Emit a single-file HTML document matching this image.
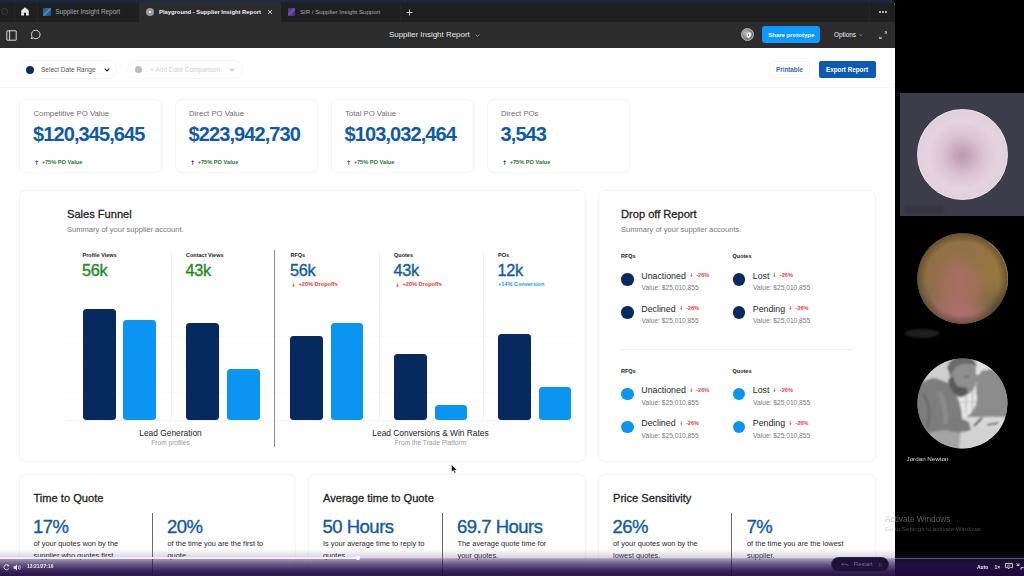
<!DOCTYPE html>
<html><head><meta charset="utf-8">
<style>
*{box-sizing:border-box;margin:0;padding:0}
html,body{width:1024px;height:576px;overflow:hidden;background:#000;font-family:"Liberation Sans",sans-serif}
.abs{position:absolute}
#win{position:absolute;left:0;top:0;width:895px;height:576px;background:#fff;overflow:hidden;border-top-right-radius:6px}
#tabs{position:absolute;left:0;top:0;width:895px;height:22px;background:#1f1f1f}
#tool{position:absolute;left:0;top:22px;width:895px;height:26px;background:#2c2c2c}
.tab{position:absolute;top:2px;height:20px;color:#b8b8b8;font-size:7px;line-height:20px;white-space:nowrap}
.card{position:absolute;background:#fff;border:1px solid #f5f6f7;border-radius:7px;box-shadow:0 0 3px rgba(0,0,0,.025)}
.lbl{position:absolute;color:#6f6f6f;font-size:7.75px;white-space:nowrap}
.big{position:absolute;color:#0e5aa7;font-weight:bold;font-size:20px;white-space:nowrap;letter-spacing:-.9px}
.grn{position:absolute;color:#237a30;font-weight:bold;font-size:5.65px;white-space:nowrap}
.h{position:absolute;color:#1f1f1f;font-size:11.1px;white-space:nowrap;-webkit-text-stroke:.3px #1f1f1f}
.sub{position:absolute;color:#777;font-size:7.55px;white-space:nowrap}
.bar{position:absolute;border-radius:3.5px}
.nv{background:#072a5e}.bl{background:#0a95f3}
.t5{position:absolute;font-size:5.5px;font-weight:bold;color:#222;white-space:nowrap}
.num{position:absolute;font-size:16.3px;white-space:nowrap;letter-spacing:-.3px;-webkit-text-stroke:.35px currentColor}
.red{position:absolute;font-size:5.6px;font-weight:bold;color:#e23b30;white-space:nowrap}
.dot{position:absolute;width:12.5px;height:12.5px;border-radius:50%}
.it{position:absolute;font-size:8.8px;color:#262626;white-space:nowrap}
.val{position:absolute;font-size:6.65px;color:#7a7a7a;white-space:nowrap}
.pct{position:absolute;color:#0e5aa7;font-size:18.5px;white-space:nowrap;letter-spacing:-.5px;-webkit-text-stroke:.35px #0e5aa7}
.desc{position:absolute;color:#2a2a2a;font-size:7.4px;line-height:11.5px;white-space:nowrap}
</style></head><body><div id="all" style="position:absolute;left:0;top:0;width:1024px;height:576px;overflow:hidden;filter:blur(.35px)">
<div id="win">
<div id="tabs">
<div class="abs" style="left:0;top:0;width:895px;height:2.5px;background:linear-gradient(#1b2b47,#18233a)"></div>
<div class="abs" style="left:0;top:14px;width:7px;height:7px;border:1px solid #3c3c3c;border-radius:50%;left:1px;top:8px"></div>
<div class="abs" style="left:14px;top:2px;width:1px;height:20px;background:#262626"></div>
<div class="abs" style="left:37px;top:2px;width:1px;height:20px;background:#262626"></div>
<svg class="abs" style="left:21px;top:7px" width="8" height="9" viewBox="0 0 8 9"><path d="M4 0.3 L7.8 3.6 V8.6 H5 V5.8 H3 V8.6 H0.2 V3.6 Z" fill="#e4e4e4"/></svg>
<div class="abs" style="left:43px;top:8px;width:8px;height:8px;background:linear-gradient(135deg,#20527f 0%,#2f74ad 45%,#5d9bcc 50%,#2a6aa2 58%,#1d4d7a 100%);border-radius:1px"></div>
<div class="tab" style="left:55.5px;color:#a9a9a9;font-size:6.35px">Supplier Insight Report</div>
<div class="abs" style="left:139px;top:2px;width:142px;height:20px;background:#2c2c2c;border-radius:3px 3px 0 0"></div>
<div class="abs" style="left:146px;top:8px;width:8px;height:8px;background:#9a9a9a;border-radius:50%"></div>
<div class="abs" style="left:149px;top:11px;width:2px;height:2px;background:#fff;border-radius:50%"></div>
<div class="tab" style="left:159px;color:#f2f2f2;font-weight:bold;font-size:5.85px">Playground - Supplier Insight Report</div>
<svg class="abs" style="left:267px;top:9px" width="6" height="6" viewBox="0 0 6 6"><path d="M1 1 L5 5 M5 1 L1 5" stroke="#d8d8d8" stroke-width="0.9"/></svg>
<div class="abs" style="left:287.5px;top:8px;width:7px;height:8px;background:linear-gradient(135deg,#4c2f86 0%,#6642a6 45%,#8467bd 50%,#5c3a9c 58%,#472b80 100%);border-radius:1px"></div>
<div class="tab" style="left:300px;color:#a9a9a9;font-size:6.1px">SIR / Supplier Insight Support</div>
<div class="abs" style="left:400px;top:2px;width:1px;height:20px;background:#262626"></div>
<svg class="abs" style="left:406px;top:8.5px" width="7" height="7" viewBox="0 0 7 7"><path d="M3.5 0.5 V6.5 M0.5 3.5 H6.5" stroke="#d8d8d8" stroke-width="0.9"/></svg>
<div class="abs" style="left:869px;top:2px;width:1px;height:20px;background:#262626"></div>
<div class="abs" style="left:879px;top:11px;width:1.6px;height:1.6px;background:#cfcfcf;border-radius:50%;box-shadow:3px 0 0 #cfcfcf,6px 0 0 #cfcfcf"></div>
</div>
<div id="tool">
<svg class="abs" style="left:5.5px;top:7.5px" width="11" height="11" viewBox="0 0 11 11"><rect x="0.8" y="0.8" width="9.4" height="9.4" rx="0.3" fill="none" stroke="#d9d9d9" stroke-width="1"/><path d="M3.6 0.8 V10.2" stroke="#d9d9d9" stroke-width="1"/></svg>
<svg class="abs" style="left:30px;top:7px" width="12" height="12" viewBox="0 0 12 12"><path d="M6.2 1.2 A4.3 4.3 0 1 1 3.2 8.9 L1.2 9.8 L2 7.6 A4.3 4.3 0 0 1 6.2 1.2 Z" fill="none" stroke="#d9d9d9" stroke-width="1"/></svg>
<div class="abs" style="left:389px;top:0;height:26px;line-height:26px;color:#e6e6e6;font-size:7.95px;white-space:nowrap">Supplier Insight Report</div>
<svg class="abs" style="left:475px;top:11.5px" width="5" height="3" viewBox="0 0 5 3"><path d="M0.5 0.5 L2.5 2.5 L4.5 0.5" fill="none" stroke="#a5a5a5" stroke-width="0.8"/></svg>
<div class="abs" style="left:741px;top:6px;width:13px;height:13px;border-radius:50%;background:radial-gradient(circle at 40% 40%,#c9c9c9,#7a7a7a 60%,#555);border:1px solid #bdbdbd"></div><div class="abs" style="left:746.5px;top:9.5px;width:3.5px;height:6px;border-radius:50%;background:#f2f2f2;transform:rotate(25deg);filter:blur(.4px)"></div><div class="abs" style="left:747.6px;top:11.6px;width:1.6px;height:2px;border-radius:50%;background:#666"></div>
<div class="abs" style="left:762.3px;top:4px;width:58px;height:17px;background:#0d99ff;border-radius:3px;color:#fff;font-size:6px;font-weight:bold;text-align:center;line-height:18.2px">Share prototype</div>
<div class="abs" style="left:834px;top:0;height:26px;line-height:26px;color:#ededed;font-size:6.4px;white-space:nowrap">Options</div>
<svg class="abs" style="left:859.3px;top:12.3px" width="3.6" height="2.2" viewBox="0 0 5 3"><path d="M0.5 0.5 L2.5 2.5 L4.5 0.5" fill="none" stroke="#a5a5a5" stroke-width="0.8"/></svg>
<svg class="abs" style="left:878.5px;top:8.5px" width="8.6" height="8.6" viewBox="0 0 9 9"><path d="M6 0.8 H8.2 V3 M8.2 0.8 L6 3 M3 8.2 H0.8 V6 M0.8 8.2 L3 6" fill="none" stroke="#cfcfcf" stroke-width="0.95"/></svg>
</div>
<div id="content">
<!-- filter row -->
<div class="abs" style="left:0;top:87px;width:895px;height:1px;background:#f3f3f4"></div>
<div class="abs" style="left:18px;top:60px;width:99px;height:19px;border:1px solid #f4f5f6;border-radius:10px;background:#fff"></div>
<div class="abs" style="left:25.5px;top:65.5px;width:8px;height:8px;border-radius:50%;background:#0a2d66"></div>
<div class="abs" style="left:41px;top:60px;height:19px;line-height:19px;font-size:6.5px;color:#555;white-space:nowrap">Select Date Range</div>
<svg class="abs" style="left:103.5px;top:68px" width="6" height="4" viewBox="0 0 6 4"><path d="M0.7 0.7 L3 3 L5.3 0.7" fill="none" stroke="#222" stroke-width="1.1"/></svg>
<div class="abs" style="left:127px;top:60px;width:116px;height:19px;border:1px solid #f6f6f7;border-radius:10px;background:#fff"></div>
<div class="abs" style="left:134.5px;top:66px;width:7px;height:7px;border-radius:50%;background:#bdbdbd"></div>
<div class="abs" style="left:150px;top:60px;height:19px;line-height:19px;font-size:6.6px;color:#d2d2d2;white-space:nowrap">+ Add Date Comparison</div>
<svg class="abs" style="left:229px;top:68px" width="6" height="4" viewBox="0 0 6 4"><path d="M0.7 0.7 L3 3 L5.3 0.7" fill="none" stroke="#c8c8c8" stroke-width="1.1"/></svg>
<div class="abs" style="left:769px;top:61px;width:41px;height:17px;border:1px solid #f5f5f6;border-radius:2px;color:#346da9;font-size:6.3px;font-weight:bold;text-align:center;line-height:15.5px">Printable</div>
<div class="abs" style="left:818.5px;top:61px;width:57px;height:17px;border-radius:2px;background:#0b5bb3;color:#fff;font-size:6.3px;font-weight:bold;text-align:center;line-height:17px">Export Report</div>
<!-- KPI cards -->
<div class="card" style="left:18.5px;top:98.5px;width:143.5px;height:74.5px"></div>
<div class="lbl" style="left:33.5px;top:108.5px">Competitive PO Value</div>
<div class="big" style="left:33px;top:123px">$120,345,645</div>
<div class="grn" style="left:34px;top:158.5px"><svg style="position:absolute;left:0.6px;top:1.2px" width="3.4" height="5" viewBox="0 0 3.4 5"><path d="M1.7 0.2 L3.3 1.9 H0.1Z" fill="#2c5c38"/><path d="M1.7 1.2 V4.9" stroke="#2c5c38" stroke-width="0.8"/></svg><span style="margin-left:7.7px">+75% PO Value</span></div>
<div class="card" style="left:174.5px;top:98.5px;width:143.5px;height:74.5px"></div>
<div class="lbl" style="left:189px;top:108.5px">Direct PO Value</div>
<div class="big" style="left:188.5px;top:123px">$223,942,730</div>
<div class="grn" style="left:190px;top:158.5px"><svg style="position:absolute;left:0.6px;top:1.2px" width="3.4" height="5" viewBox="0 0 3.4 5"><path d="M1.7 0.2 L3.3 1.9 H0.1Z" fill="#2c5c38"/><path d="M1.7 1.2 V4.9" stroke="#2c5c38" stroke-width="0.8"/></svg><span style="margin-left:7.7px">+75% PO Value</span></div>
<div class="card" style="left:330.5px;top:98.5px;width:143.5px;height:74.5px"></div>
<div class="lbl" style="left:345px;top:108.5px">Total PO Value</div>
<div class="big" style="left:344.5px;top:123px">$103,032,464</div>
<div class="grn" style="left:346px;top:158.5px"><svg style="position:absolute;left:0.6px;top:1.2px" width="3.4" height="5" viewBox="0 0 3.4 5"><path d="M1.7 0.2 L3.3 1.9 H0.1Z" fill="#2c5c38"/><path d="M1.7 1.2 V4.9" stroke="#2c5c38" stroke-width="0.8"/></svg><span style="margin-left:7.7px">+75% PO Value</span></div>
<div class="card" style="left:486.5px;top:98.5px;width:143.5px;height:74.5px"></div>
<div class="lbl" style="left:501px;top:108.5px">Direct POs</div>
<div class="big" style="left:500.5px;top:123px">3,543</div>
<div class="grn" style="left:502px;top:158.5px"><svg style="position:absolute;left:0.6px;top:1.2px" width="3.4" height="5" viewBox="0 0 3.4 5"><path d="M1.7 0.2 L3.3 1.9 H0.1Z" fill="#2c5c38"/><path d="M1.7 1.2 V4.9" stroke="#2c5c38" stroke-width="0.8"/></svg><span style="margin-left:7.7px">+75% PO Value</span></div>
<div class="card" style="left:18.5px;top:189.5px;width:567.5px;height:272.5px"></div>
<div class="h" style="left:67px;top:207.6px">Sales Funnel</div>
<div class="sub" style="left:67px;top:224.5px">Summary of your supplier account.</div>
<div class="abs" style="left:66px;top:308px;width:508px;height:0;border-top:1px dotted #f7f7f7"></div>
<div class="abs" style="left:66px;top:336px;width:508px;height:0;border-top:1px dotted #f7f7f7"></div>
<div class="abs" style="left:66px;top:364px;width:508px;height:0;border-top:1px dotted #f7f7f7"></div>
<div class="abs" style="left:66px;top:392px;width:508px;height:0;border-top:1px dotted #f7f7f7"></div>
<div class="abs" style="left:66px;top:420px;width:508px;height:1px;background:#f4f4f4"></div>
<div class="abs" style="left:170.5px;top:250px;width:1px;height:171px;background:#f1f1f1"></div>
<div class="abs" style="left:378.5px;top:250px;width:1px;height:171px;background:#f1f1f1"></div>
<div class="abs" style="left:482.5px;top:250px;width:1px;height:171px;background:#f1f1f1"></div>
<div class="abs" style="left:273.5px;top:250px;width:1.5px;height:197px;background:#8f8f8f"></div>
<div class="t5" style="left:82.5px;top:252px">Profile Views</div>
<div class="num" style="left:82px;top:261.3px;color:#1b8a23">56k</div>
<div class="t5" style="left:186px;top:252px">Contact Views</div>
<div class="num" style="left:185.5px;top:261.3px;color:#1b8a23">43k</div>
<div class="t5" style="left:290.5px;top:252px">RFQs</div>
<div class="num" style="left:290px;top:261.3px;color:#0e5aa7">56k</div>
<div class="red" style="left:290.5px;top:281px"><svg style="position:absolute;left:1.4px;top:1.5px" width="2.8" height="4.2" viewBox="0 0 2.8 4.2"><path d="M1.4 4.1 L2.7 2.5 H0.1Z" fill="#e0453a"/><path d="M1.4 0.1 V3" stroke="#e0453a" stroke-width="0.7"/></svg><span style="margin-left:8px">+20% Dropoffs</span></div>
<div class="t5" style="left:394px;top:252px">Quotes</div>
<div class="num" style="left:393.5px;top:261.3px;color:#0e5aa7">43k</div>
<div class="red" style="left:394.5px;top:281px"><svg style="position:absolute;left:1.4px;top:1.5px" width="2.8" height="4.2" viewBox="0 0 2.8 4.2"><path d="M1.4 4.1 L2.7 2.5 H0.1Z" fill="#e0453a"/><path d="M1.4 0.1 V3" stroke="#e0453a" stroke-width="0.7"/></svg><span style="margin-left:8px">+20% Dropoffs</span></div>
<div class="t5" style="left:498px;top:252px">POs</div>
<div class="num" style="left:497.5px;top:261.3px;color:#0e5aa7">12k</div>
<div class="red" style="left:498px;top:281px;color:#1a98ee;font-size:5.55px">+14% Conversion</div>
<div class="bar nv" style="left:82.5px;top:308.5px;width:33.0px;height:111.5px"></div>
<div class="bar bl" style="left:122.7px;top:320px;width:33.0px;height:100px"></div>
<div class="bar nv" style="left:186px;top:323px;width:33px;height:97px"></div>
<div class="bar bl" style="left:227px;top:369px;width:32.5px;height:51px"></div>
<div class="bar nv" style="left:290.4px;top:335.5px;width:32.2px;height:84.5px"></div>
<div class="bar bl" style="left:330.7px;top:323px;width:32.6px;height:97px"></div>
<div class="bar nv" style="left:394px;top:353.5px;width:32.5px;height:66.5px"></div>
<div class="bar bl" style="left:434.7px;top:405px;width:32.6px;height:15px"></div>
<div class="bar nv" style="left:498px;top:334px;width:32.5px;height:86px"></div>
<div class="bar bl" style="left:538.7px;top:387px;width:32.6px;height:33px"></div>
<div class="abs" style="left:70.5px;top:427.8px;width:200px;text-align:center;font-size:8.4px;color:#222;white-space:nowrap">Lead Generation</div>
<div class="abs" style="left:70.5px;top:438.8px;width:200px;text-align:center;font-size:6.6px;color:#9a9a9a;white-space:nowrap">From profiles</div>
<div class="abs" style="left:330.5px;top:427.8px;width:200px;text-align:center;font-size:8.4px;color:#222;white-space:nowrap">Lead Conversions &amp; Win Rates</div>
<div class="abs" style="left:330.5px;top:438.8px;width:200px;text-align:center;font-size:6.6px;color:#9a9a9a;white-space:nowrap">From the Trade Platform</div>
<div class="card" style="left:598px;top:189.5px;width:277.5px;height:272.5px"></div>
<div class="h" style="left:621px;top:207.6px">Drop off Report</div>
<div class="sub" style="left:621px;top:224.5px">Summary of your supplier accounts.</div>
<div class="t5" style="left:621px;top:253px">RFQs</div>
<div class="t5" style="left:732.5px;top:253px">Quotes</div>
<div class="dot" style="left:621px;top:273.2px;background:#0a2a5e"></div>
<div class="it" style="left:641.3px;top:270.6px">Unactioned <span style="font-size:5.6px;font-weight:bold;color:#e2473c;position:relative;top:-1.3px;left:1.6px"><svg style="display:inline-block;vertical-align:-0.2px;margin-right:3.6px" width="2.8" height="4.2" viewBox="0 0 2.8 4.2"><path d="M1.4 4.1 L2.7 2.5 H0.1Z" fill="#e0453a"/><path d="M1.4 0.1 V3" stroke="#e0453a" stroke-width="0.7"/></svg>-26%</span></div>
<div class="val" style="left:641.6px;top:284.2px">Value: $25,010,855</div><div class="dot" style="left:732.5px;top:273.2px;background:#0a2a5e"></div>
<div class="it" style="left:752.8px;top:270.6px">Lost <span style="font-size:5.6px;font-weight:bold;color:#e2473c;position:relative;top:-1.3px;left:1.6px"><svg style="display:inline-block;vertical-align:-0.2px;margin-right:3.6px" width="2.8" height="4.2" viewBox="0 0 2.8 4.2"><path d="M1.4 4.1 L2.7 2.5 H0.1Z" fill="#e0453a"/><path d="M1.4 0.1 V3" stroke="#e0453a" stroke-width="0.7"/></svg>-26%</span></div>
<div class="val" style="left:753.1px;top:284.2px">Value: $25,010,855</div><div class="dot" style="left:621px;top:306.2px;background:#0a2a5e"></div>
<div class="it" style="left:641.3px;top:303.6px">Declined <span style="font-size:5.6px;font-weight:bold;color:#e2473c;position:relative;top:-1.3px;left:1.6px"><svg style="display:inline-block;vertical-align:-0.2px;margin-right:3.6px" width="2.8" height="4.2" viewBox="0 0 2.8 4.2"><path d="M1.4 4.1 L2.7 2.5 H0.1Z" fill="#e0453a"/><path d="M1.4 0.1 V3" stroke="#e0453a" stroke-width="0.7"/></svg>-26%</span></div>
<div class="val" style="left:641.6px;top:317.2px">Value: $25,010,855</div><div class="dot" style="left:732.5px;top:306.2px;background:#0a2a5e"></div>
<div class="it" style="left:752.8px;top:303.6px">Pending <span style="font-size:5.6px;font-weight:bold;color:#e2473c;position:relative;top:-1.3px;left:1.6px"><svg style="display:inline-block;vertical-align:-0.2px;margin-right:3.6px" width="2.8" height="4.2" viewBox="0 0 2.8 4.2"><path d="M1.4 4.1 L2.7 2.5 H0.1Z" fill="#e0453a"/><path d="M1.4 0.1 V3" stroke="#e0453a" stroke-width="0.7"/></svg>-26%</span></div>
<div class="val" style="left:753.1px;top:317.2px">Value: $25,010,855</div>
<div class="abs" style="left:621px;top:348.5px;width:231px;height:1px;background:#f1f1f2"></div>
<div class="t5" style="left:621px;top:367.5px">RFQs</div>
<div class="t5" style="left:732.5px;top:367.5px">Quotes</div>
<div class="dot" style="left:621px;top:387.7px;background:#0a95f3"></div>
<div class="it" style="left:641.3px;top:385.1px">Unactioned <span style="font-size:5.6px;font-weight:bold;color:#e2473c;position:relative;top:-1.3px;left:1.6px"><svg style="display:inline-block;vertical-align:-0.2px;margin-right:3.6px" width="2.8" height="4.2" viewBox="0 0 2.8 4.2"><path d="M1.4 4.1 L2.7 2.5 H0.1Z" fill="#e0453a"/><path d="M1.4 0.1 V3" stroke="#e0453a" stroke-width="0.7"/></svg>-26%</span></div>
<div class="val" style="left:641.6px;top:398.7px">Value: $25,010,855</div><div class="dot" style="left:732.5px;top:387.7px;background:#0a95f3"></div>
<div class="it" style="left:752.8px;top:385.1px">Lost <span style="font-size:5.6px;font-weight:bold;color:#e2473c;position:relative;top:-1.3px;left:1.6px"><svg style="display:inline-block;vertical-align:-0.2px;margin-right:3.6px" width="2.8" height="4.2" viewBox="0 0 2.8 4.2"><path d="M1.4 4.1 L2.7 2.5 H0.1Z" fill="#e0453a"/><path d="M1.4 0.1 V3" stroke="#e0453a" stroke-width="0.7"/></svg>-26%</span></div>
<div class="val" style="left:753.1px;top:398.7px">Value: $25,010,855</div><div class="dot" style="left:621px;top:420.7px;background:#0a95f3"></div>
<div class="it" style="left:641.3px;top:418.1px">Declined <span style="font-size:5.6px;font-weight:bold;color:#e2473c;position:relative;top:-1.3px;left:1.6px"><svg style="display:inline-block;vertical-align:-0.2px;margin-right:3.6px" width="2.8" height="4.2" viewBox="0 0 2.8 4.2"><path d="M1.4 4.1 L2.7 2.5 H0.1Z" fill="#e0453a"/><path d="M1.4 0.1 V3" stroke="#e0453a" stroke-width="0.7"/></svg>-26%</span></div>
<div class="val" style="left:641.6px;top:431.7px">Value: $25,010,855</div><div class="dot" style="left:732.5px;top:420.7px;background:#0a95f3"></div>
<div class="it" style="left:752.8px;top:418.1px">Pending <span style="font-size:5.6px;font-weight:bold;color:#e2473c;position:relative;top:-1.3px;left:1.6px"><svg style="display:inline-block;vertical-align:-0.2px;margin-right:3.6px" width="2.8" height="4.2" viewBox="0 0 2.8 4.2"><path d="M1.4 4.1 L2.7 2.5 H0.1Z" fill="#e0453a"/><path d="M1.4 0.1 V3" stroke="#e0453a" stroke-width="0.7"/></svg>-26%</span></div>
<div class="val" style="left:753.1px;top:431.7px">Value: $25,010,855</div>
<!-- bottom cards -->
<div class="card" style="left:18.5px;top:473.5px;width:277.5px;height:120px"></div>
<div class="h" style="left:33.5px;top:492px">Time to Quote</div>
<div class="pct" style="left:33px;top:515.6px">17%</div>
<div class="desc" style="left:33.5px;top:538px">of your quotes won by the<br>supplier who quotes first.</div>
<div class="abs" style="left:151.6px;top:513px;width:1px;height:63px;background:#6a6a6a"></div>
<div class="pct" style="left:167px;top:515.6px">20%</div>
<div class="desc" style="left:167.5px;top:538px">of the time you are the first to<br>quote.</div>
<div class="card" style="left:308px;top:473.5px;width:278px;height:120px"></div>
<div class="h" style="left:323px;top:492px">Average time to Quote</div>
<div class="pct" style="left:322.5px;top:515.6px">50 Hours</div>
<div class="desc" style="left:323px;top:538px">Is your average time to reply to<br>quotes.</div>
<div class="abs" style="left:441.5px;top:513px;width:1px;height:63px;background:#6a6a6a"></div>
<div class="pct" style="left:457px;top:515.6px">69.7 Hours</div>
<div class="desc" style="left:457.5px;top:538px">The average quote time for<br>your quotes.</div>
<div class="card" style="left:598px;top:473.5px;width:277.5px;height:120px"></div>
<div class="h" style="left:613px;top:492px">Price Sensitivity</div>
<div class="pct" style="left:612.5px;top:515.6px">26%</div>
<div class="desc" style="left:613px;top:538px">of your quotes won by the<br>lowest quotes.</div>
<div class="abs" style="left:731px;top:513px;width:1px;height:63px;background:#6a6a6a"></div>
<div class="pct" style="left:746.5px;top:515.6px">7%</div>
<div class="desc" style="left:747px;top:538px">of the time you are the lowest<br>supplier.</div>
<!-- cursor -->
<svg class="abs" style="left:451px;top:464px" width="7" height="10" viewBox="0 0 7 10"><path d="M0.5 0.5 V8 L2.3 6.4 L3.6 9.3 L4.8 8.8 L3.5 6 H6 Z" fill="#111" stroke="#fff" stroke-width="0.5"/></svg>


</div>
</div>
<div id="side">
<div class="abs" style="left:900px;top:93px;width:124px;height:122.5px;background:#3c3c4b"></div>
<div class="abs" style="left:904px;top:205px;width:40px;height:8px;border-radius:4px;background:#35353f;filter:blur(1.2px)"></div>
<div class="abs" style="left:916.5px;top:109px;width:91px;height:91px;border-radius:50%;border:1px solid #ece6ea;background:radial-gradient(circle at 50% 51%,#bd9cb0 0%,#c4a4b7 10%,#dbc3d3 32%,#e5d4df 55%,#dfcfdb 76%,#bfb0be 92%,#a497a5 100%)"></div>
<svg class="abs" style="left:916.5px;top:232.5px" width="91" height="91" viewBox="0 0 91 91">
<defs><filter id="b2" x="-30%" y="-30%" width="160%" height="160%"><feGaussianBlur stdDeviation="8"/></filter><clipPath id="c2"><circle cx="45.5" cy="45.5" r="45.3"/></clipPath>
<radialGradient id="v2" cx="50%" cy="50%" r="50%"><stop offset="0.8" stop-color="#2a1c10" stop-opacity="0"/><stop offset="1" stop-color="#2a1c10" stop-opacity=".4"/></radialGradient></defs>
<g clip-path="url(#c2)"><rect width="91" height="91" fill="#8e6f46"/>
<g filter="url(#b2)"><ellipse cx="44" cy="16" rx="40" ry="14" fill="#927246"/><ellipse cx="42" cy="52" rx="19" ry="25" fill="#a86e62"/><ellipse cx="40" cy="82" rx="28" ry="13" fill="#aa706c"/><ellipse cx="78" cy="40" rx="14" ry="28" fill="#987840"/><ellipse cx="80" cy="72" rx="13" ry="12" fill="#625f44"/><ellipse cx="8" cy="66" rx="10" ry="16" fill="#846e52"/></g>
<circle cx="45.5" cy="45.5" r="45.5" fill="url(#v2)"/></g>
<path d="M72 9.5 A45 45 0 0 1 89.5 57" fill="none" stroke="#d2a060" stroke-width="0.7" stroke-opacity=".7"/>
</svg>
<div class="abs" style="left:905px;top:329px;width:34px;height:8.5px;border-radius:50%;background:#1f1f1f;filter:blur(.8px)"></div>
<svg class="abs" style="left:916.5px;top:357.5px" width="91" height="91" viewBox="0 0 91 91">
<defs><filter id="b3" x="-30%" y="-30%" width="160%" height="160%"><feGaussianBlur stdDeviation="1.2"/></filter><clipPath id="c3"><circle cx="45.5" cy="45.5" r="45"/></clipPath></defs>
<g clip-path="url(#c3)"><rect width="91" height="91" fill="#8a8a8a"/>
<g filter="url(#b3)">
<rect x="-5" y="-5" width="44" height="32" fill="#cfcfcf"/>
<rect x="55" y="-5" width="32" height="22" fill="#e2e2e2"/>
<rect x="38" y="24" width="26" height="36" fill="#e9e9e9"/>
<path d="M49 30 V56 M55.5 28 V56" stroke="#b5b5b5" stroke-width="1.4"/>
<path d="M40 44 H64" stroke="#c5c5c5" stroke-width="1.2"/>
<path d="M64 13 Q76 9 96 14 V60 H48 Q60 52 60 40 Q57 24 64 13Z" fill="#8c8c8c"/>
<path d="M44 59 H96 V96 H40Z" fill="#d9d9d9"/>
<path d="M-6 40 Q0 22 18 20 L34 26 L40 38 Q46 52 45 64 L50 70 L44 76 H-6Z" fill="#7d7d7d"/>
<path d="M6 36 Q16 50 10 70" stroke="#6e6e6e" stroke-width="3" fill="none"/>
<path d="M22 34 Q30 48 28 66" stroke="#8b8b8b" stroke-width="5" fill="none"/>
<path d="M32 8 Q34 -2 46 -1 Q58 0 59 8 L59 26 Q56 36 46 38 Q36 36 33 26Z" fill="#8f8f8f"/>
<path d="M30 10 Q34 -3 48 -2 Q58 -1 60 8 Q50 4 42 7 Q36 10 34 18Z" fill="#6b6b6b"/>
<path d="M31 22 Q33 34 42 39 Q48 40 51 34 L49 29 Q42 31 38 25 L36 18Z" fill="#585858"/>
<path d="M47 19 H52" stroke="#555" stroke-width="1.3"/>
<path d="M8 76 Q28 70 50 73 L78 78 L76 92 H6Z" fill="#a4a4a4"/>
<path d="M44 72 L80 70 L84 92 H42Z" fill="#d2d2d2"/>
<path d="M32 62 Q42 58 52 64 L54 72 Q44 76 32 73Z" fill="#7a7a7a"/>
<path d="M57 68 L65 60" stroke="#2e2e2e" stroke-width="1.8"/>
<path d="M70 67 L81 65" stroke="#3a3a3a" stroke-width="1.5"/>
</g></g></svg>
<div class="abs" style="left:906.5px;top:454.5px;color:#dcdcdc;font-size:6.25px;white-space:nowrap">Jordan Newton</div>
<div class="abs" style="left:885px;top:513.5px;font-size:8.3px;white-space:nowrap"><span style="color:#c9c9c9">Ac</span><span style="color:#5c5c5c">tivate Windows</span></div>
<div class="abs" style="left:885px;top:524.5px;font-size:6.2px;white-space:nowrap"><span style="color:#cfcfcf">Go </span><span style="color:#4a4a4a">to Settings to activate Windows.</span></div>
</div>
<div class="abs" style="left:0;top:549px;width:1024px;height:9px;background:linear-gradient(to bottom,rgba(70,50,110,0) 0%,rgba(70,50,110,.22) 100%)"></div>
<div class="abs" style="left:0;top:558px;width:1024px;height:18px;background:linear-gradient(to bottom,rgba(56,32,104,.40) 0%,rgba(44,22,86,.72) 35%,rgba(34,14,70,.9) 70%,rgba(28,9,60,.95) 100%)"></div>
<div class="abs" style="left:0;top:557.5px;width:1024px;height:1px;background:rgba(190,180,210,.45)"></div>
<div class="abs" style="left:0;top:557px;width:358px;height:1.8px;background:#f1eef6"></div>
<div class="abs" style="left:356px;top:556px;width:4px;height:4px;border-radius:50%;background:#fff"></div>
<div class="abs" style="left:27px;top:564px;color:#e8e8e8;font-size:4.9px;white-space:nowrap;font-weight:bold">13:21/27:16</div>
<svg class="abs" style="left:3px;top:563.5px" width="7" height="7" viewBox="0 0 7 7"><path d="M5.5 1.5 A2.6 2.6 0 1 0 5.8 4.6" fill="none" stroke="#e6e6e6" stroke-width="0.9"/><path d="M4 0.5 L6.3 1.2 L5 2.8Z" fill="#e6e6e6"/></svg>
<svg class="abs" style="left:12.5px;top:563.5px" width="9" height="7" viewBox="0 0 9 7"><path d="M0.5 2.3 H2 L4 0.6 V6.4 L2 4.7 H0.5Z" fill="#e6e6e6"/><path d="M5.3 2 Q6.3 3.5 5.3 5 M6.6 1 Q8.3 3.5 6.6 6" fill="none" stroke="#e6e6e6" stroke-width="0.7"/></svg>
<div class="abs" style="left:831px;top:556.5px;width:57.5px;height:15.5px;border-radius:8px;background:#1d1139;border:1px solid #2e2350"></div>
<div class="abs" style="left:854px;top:560.5px;color:#7a7199;font-size:5.8px;white-space:nowrap">Restart</div>
<svg class="abs" style="left:841px;top:561.5px" width="8" height="5" viewBox="0 0 8 5"><path d="M2.2 0.6 L0.6 2.2 L2.2 3.8 M0.8 2.2 H5.5 Q7.2 2.2 7.2 4" fill="none" stroke="#6f668d" stroke-width="0.8"/></svg>
<div class="abs" style="left:878.5px;top:561.5px;color:#4d4470;font-size:5px">R</div>
<div class="abs" style="left:977px;top:563.5px;color:#e8e8e8;font-size:5px;font-weight:bold;white-space:nowrap">Auto</div>
<div class="abs" style="left:994.5px;top:563.5px;color:#e8e8e8;font-size:5px;font-weight:bold;white-space:nowrap">1&times;</div>
<svg class="abs" style="left:1004.5px;top:563px" width="8" height="7" viewBox="0 0 8 7"><path d="M0.5 0.5 H7.5 V4.6 H4.6 L3.4 6 V4.6 H0.5Z" fill="none" stroke="#e6e6e6" stroke-width="0.8"/><path d="M2 2 H6 M2 3.2 H5" stroke="#e6e6e6" stroke-width="0.5"/></svg>
<svg class="abs" style="left:1016px;top:563px" width="8" height="7" viewBox="0 0 8 7"><path d="M0.6 2.6 L3 2.6 L3 0.4 M0.5 0.5 L3 2.6" fill="none" stroke="#e6e6e6" stroke-width="0.9"/><path d="M5 6.8 V4.6 H7.6" fill="none" stroke="#e6e6e6" stroke-width="0.9"/></svg>
</div></body></html>
